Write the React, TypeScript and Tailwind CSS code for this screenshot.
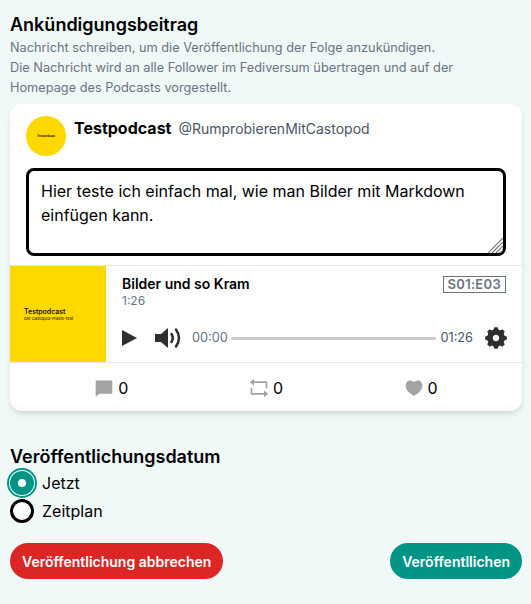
import { RiChat4Fill, RiHeart3Fill, RiRepeatLine, RiSettings5Fill } from "react-icons/ri";

function Stat({ icon, count }: { icon: React.ReactNode; count: number }) {
  return (
    <div className="flex items-center gap-[4px] text-[16px] leading-6 text-black">
      {icon}
      <span>{count}</span>
    </div>
  );
}

export default function App() {
  return (
    <div className="min-h-[604px] bg-[#f0f9f8] pt-[13px] pr-[9px] pl-[10px] font-['Inter',sans-serif] text-black">
      {/* Announcement */}
      <h2 className="text-[18px] leading-[24px] font-semibold">Ankündigungsbeitrag</h2>
      <p className="mt-[1px] text-[12.75px] leading-[20px] text-[#6b7280]">
        Nachricht schreiben, um die Veröffentlichung der Folge anzukündigen.
        <br />
        Die Nachricht wird an alle Follower im Fediversum übertragen und auf der
        <br />
        Homepage des Podcasts vorgestellt.
      </p>

      <div className="mt-[6px] overflow-hidden rounded-xl bg-white shadow-md">
        <div className="flex gap-2 px-4 pt-3">
          <div className="flex h-10 w-10 shrink-0 flex-col items-center justify-center rounded-full bg-[#ffd800]">
            <span className="text-[3px] leading-[4px] font-semibold">Testpodcast</span>
          </div>
          <div className="flex items-baseline gap-[7px]">
            <span className="text-[16px] leading-6 font-bold">Testpodcast</span>
            <span className="text-[14px] leading-5 text-[#4b5563]">@RumprobierenMitCastopod</span>
          </div>
        </div>

        <div className="relative px-4 pt-[12px] pb-[9px]">
          <textarea
            readOnly
            className="block h-[88px] w-full resize-none rounded-lg border-[3px] border-black bg-white px-3 py-[8px] text-[16px] leading-6 outline-none"
            defaultValue="Hier teste ich einfach mal, wie man Bilder mit Markdown einfügen kann."
          />
          {/* resize handle */}
          <svg className="absolute right-[19px] bottom-[12px] h-[15px] w-[15px]" viewBox="0 0 15 15" stroke="#777777" strokeWidth="1.2">
            <path d="M0 15 15 0M4 15 15 4M8 15 15 8M12 15 15 12" />
          </svg>
        </div>

        {/* Player */}
        <div className="flex border-y border-[#e5e7eb]">
          <div className="flex h-24 w-24 shrink-0 flex-col items-start justify-center bg-[#ffd800] pl-[14px]">
            <span className="text-[7px] leading-[8px] font-medium">Testpodcast</span>
            <span className="text-[4px] leading-[5px]">Der Castopod-Praxis-Test</span>
          </div>
          <div className="flex min-w-0 flex-1 flex-col px-4 pt-[10px]">
            <div className="flex items-start justify-between">
              <div>
                <div className="text-[14px] leading-4 font-semibold">Bilder und so Kram</div>
                <div className="mt-[1px] text-[12px] leading-4 text-[#64748b]">1:26</div>
              </div>
              <span className="border border-[#6b7280] px-1 text-[13px] leading-[15px] font-semibold tracking-[0.3px] text-[#6b7280]">
                S01:E03
              </span>
            </div>
            <div className="mt-[16px] flex items-center text-[#2e2e2e]">
              <svg className="h-[16px] w-[15px]" viewBox="0 0 15 16" fill="currentColor">
                <path d="M0 0 15 8 0 16Z" />
              </svg>
              <svg className="ml-[18px] h-[22px] w-[27px]" viewBox="0 0 27 22" fill="currentColor">
                <path d="M0 7H6L13 1V21L6 15H0Z" />
                <path d="M16.5 7Q19 11 16.5 15M21 2.5Q27 11 21 19.5" fill="none" stroke="currentColor" strokeWidth="2.5" strokeLinecap="round" />
              </svg>
              <span className="ml-[10px] text-[12.75px] leading-4 text-[#64748b]">00:00</span>
              <div className="mr-[4px] ml-[3px] h-[3px] flex-1 rounded bg-[#cccccc]" />
              <span className="text-[12.75px] leading-4 text-[#475569]">01:26</span>
              <RiSettings5Fill className="-mr-[3px] ml-[10px] h-[26px] w-[26px]" />
            </div>
          </div>
        </div>

        {/* Actions */}
        <div className="flex h-[48px] items-center justify-around px-[24px] pt-[1px] text-[#9ca3af]">
          <Stat icon={<RiChat4Fill className="h-[20px] w-[20px] text-[#a3a3a3]" />} count={0} />
          <Stat icon={<RiRepeatLine className="h-[20px] w-[20px] text-[#a3a3a3]" />} count={0} />
          <Stat icon={<RiHeart3Fill className="h-[20px] w-[20px] text-[#a3a3a3]" />} count={0} />
        </div>
      </div>

      {/* Publication date */}
      <h3 className="mt-[34px] text-[18px] leading-[24px] font-semibold">Veröffentlichungsdatum</h3>
      <div className="mt-[2px] flex h-6 items-center gap-2">
        <span className="flex h-6 w-6 items-center justify-center rounded-full bg-[#009486] shadow-[0_0_0_1px_white,0_0_0_3px_#009486]">
          <span className="h-2 w-2 rounded-full bg-white" />
        </span>
        <span className="text-[16px] leading-6">Jetzt</span>
      </div>
      <div className="mt-[4px] flex h-6 items-center gap-2">
        <span className="h-6 w-6 rounded-full border-[3px] border-black bg-white" />
        <span className="text-[16px] leading-6">Zeitplan</span>
      </div>

      <div className="mt-[20px] flex items-center justify-between">
        <button className="h-9 rounded-full bg-[#dc2626] px-3 text-[14px] font-semibold text-white">
          Veröffentlichung abbrechen
        </button>
        <button className="h-9 rounded-full bg-[#009486] px-3 text-[14px] font-semibold text-white">
          Veröffentllichen
        </button>
      </div>
    </div>
  );
}
